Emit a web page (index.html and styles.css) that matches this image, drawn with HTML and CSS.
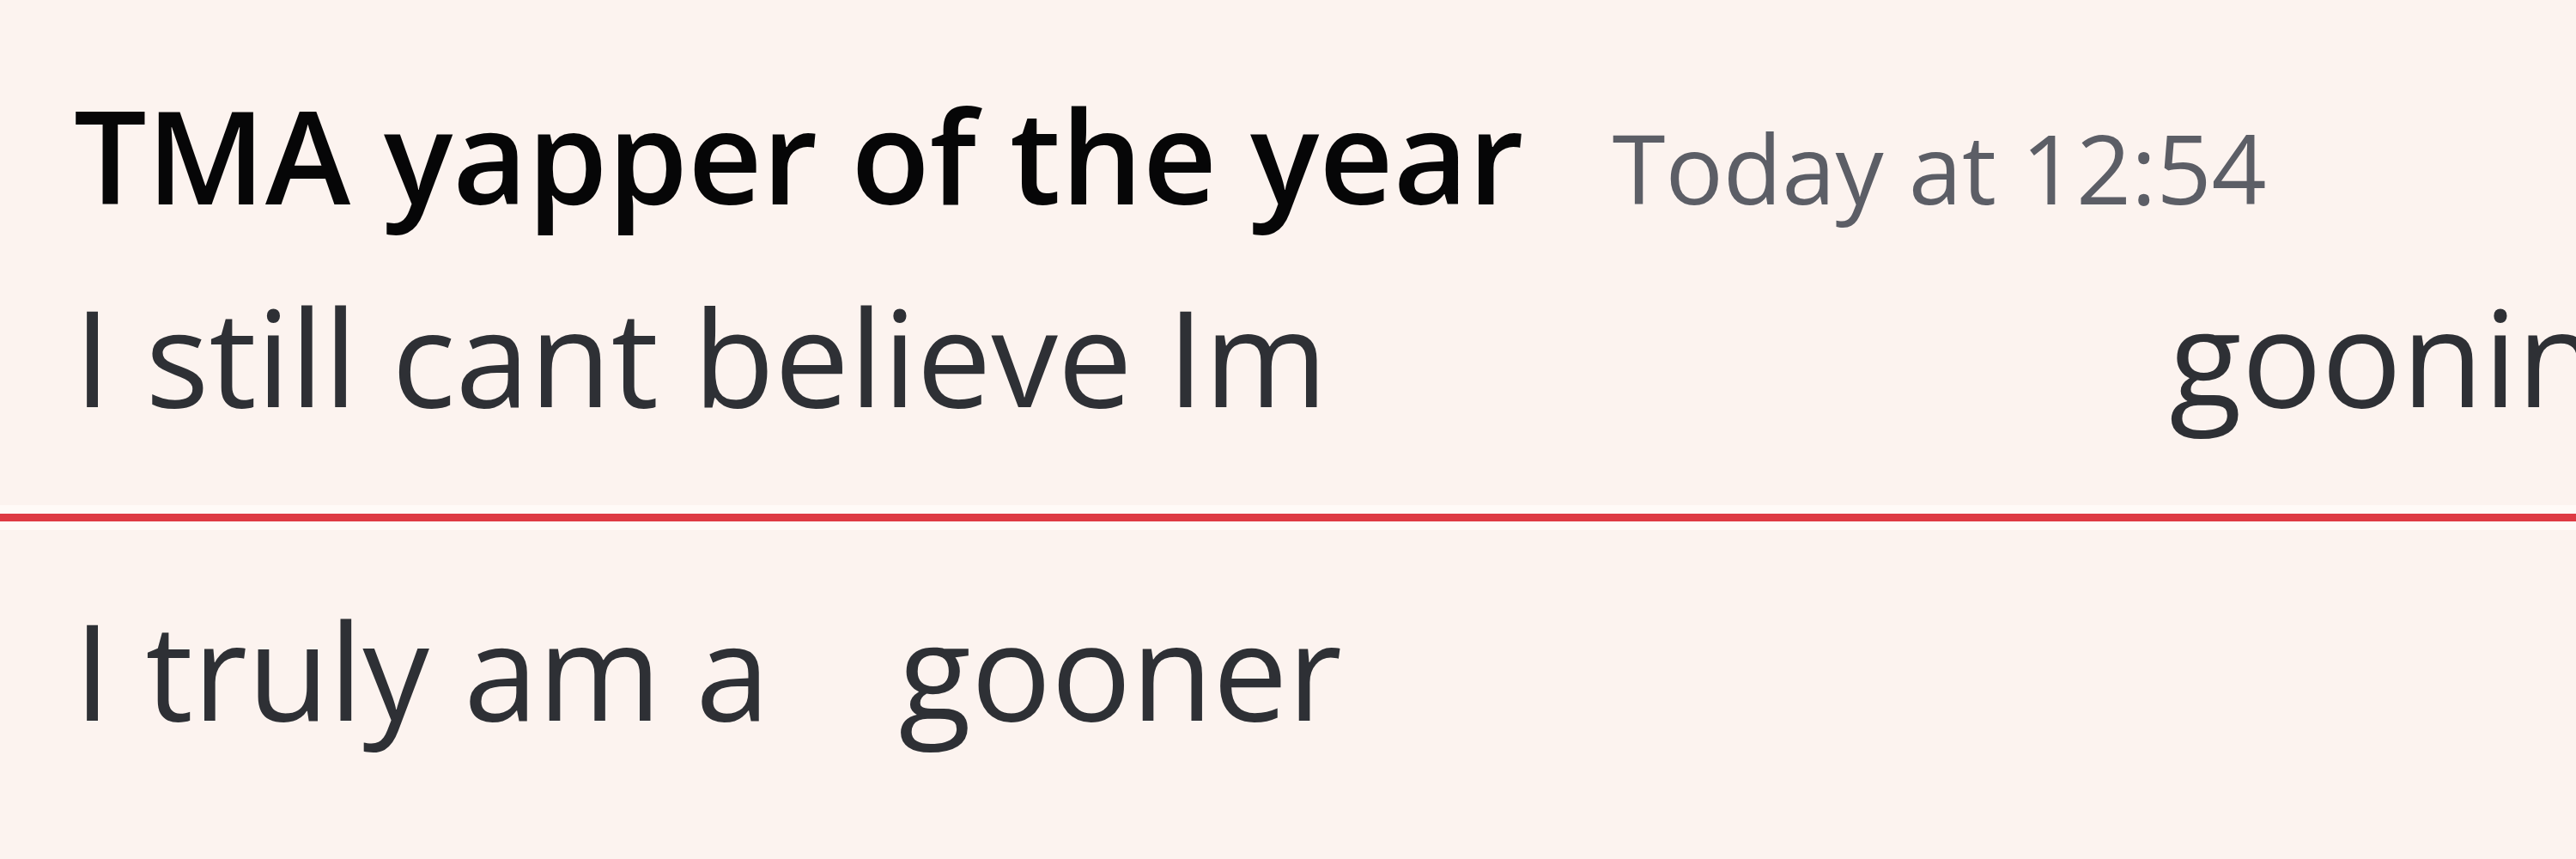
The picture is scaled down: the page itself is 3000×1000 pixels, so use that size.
FILE: index.html
```html
<!DOCTYPE html>
<html lang="en">
<head>
  <meta charset="UTF-8" />
  <meta name="viewport" content="width=device-width, initial-scale=1" />
  <title>Chat</title>
  <link rel="stylesheet" href="styles.css">
</head>
<body>

  <div class="chat">
    <div class="message">
      <div class="message-header">
        <span class="username">TMA yapper of the year</span>
        <span class="timestamp">Today at 12:54</span>
      </div>
      <div class="message-text">I still cant believe Im <span class="emoji-gap wide"></span> gooning</div>
    </div>

    <div class="new-divider"></div>

    <div class="message grouped">
      <div class="message-text">I truly am a <span class="emoji-gap"></span> gooner</div>
    </div>
  </div>

</body>
</html>
```

FILE: styles.css
```css
body {
  margin: 0;
  background: #fcf3ef;
  font-family: 'Open Sans', 'Noto Sans', sans-serif;
  color: #2e3035;
  overflow: hidden;
}

.chat {
  padding-top: 113px;
}

.message {
  padding-left: 86px;
  white-space: nowrap;
}

.message-header {
  line-height: 134px;
}

.username {
  font-size: 150px;
  font-weight: 600;
  color: #060607;
}

.timestamp {
  font-size: 112px;
  color: #5c5e66;
  margin-left: 99px;
}

.message-text {
  font-size: 155px;
  line-height: 230px;
}

.emoji-gap {
  display: inline-block;
  width: 70px;
}

.emoji-gap.wide {
  width: 900px;
}

.new-divider {
  height: 9px;
  background: #de3a43;
  margin: 69px 0 57px;
  box-shadow: 0 0 0 10px #fffaf7;
}
```
